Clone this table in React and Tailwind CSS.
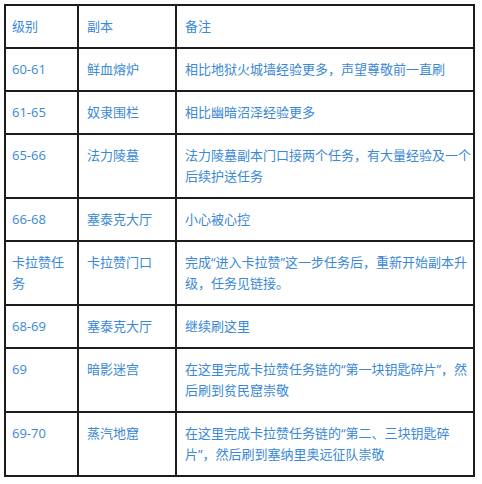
import React from "react";

const rows = [
  ["级别", "副本", ["备注"]],
  ["60-61", "鲜血熔炉", ["相比地狱火城墙经验更多，声望尊敬前一直刷"]],
  ["61-65", "奴隶围栏", ["相比幽暗沼泽经验更多"]],
  ["65-66", "法力陵墓", ["法力陵墓副本门口接两个任务，有大量经验及一个", "后续护送任务"]],
  ["66-68", "塞泰克大厅", ["小心被心控"]],
  [["卡拉赞任", "务"], "卡拉赞门口", ["完成“进入卡拉赞”这一步任务后，重新开始副本升", "级，任务见链接。"]],
  ["68-69", "塞泰克大厅", ["继续刷这里"]],
  ["69", "暗影迷宫", ["在这里完成卡拉赞任务链的“第一块钥匙碎片”，然", "后刷到贫民窟崇敬"]],
  ["69-70", "蒸汽地窟", ["在这里完成卡拉赞任务链的“第二、三块钥匙碎", "片”，然后刷到塞纳里奥远征队崇敬"]],
];

function Lines({ v }) {
  const arr = Array.isArray(v) ? v : [v];
  return arr.map((l, i) => (
    <div key={i} className="whitespace-nowrap">
      {l}
    </div>
  ));
}

export default function App() {
  return (
    <div
      className="w-[482px] h-[484px] bg-white pt-[4px] pl-[4px]"
      style={{ fontFamily: '"Open Sans", "Noto Sans CJK SC", sans-serif' }}
    >
      <table className="border-collapse table-fixed w-[471px] border-2 border-[#1c1c1c] text-[13px] leading-[21px] text-[#3a88d6]">
        <colgroup>
          <col className="w-[73px]" />
          <col className="w-[98px]" />
          <col />
        </colgroup>
        <tbody>
          {rows.map((r, i) => (
            <tr key={i}>
              {r.map((c, j) => (
                <td
                  key={j}
                  className={`border-2 border-[#1c1c1c] align-top pt-[10px] pb-[10px] ${
                    j === 0 ? "pl-[6px]" : j === 1 ? "pl-[8px]" : "pl-[8px]"
                  } pr-[4px]`}
                >
                  <Lines v={c} />
                </td>
              ))}
            </tr>
          ))}
        </tbody>
      </table>
    </div>
  );
}
